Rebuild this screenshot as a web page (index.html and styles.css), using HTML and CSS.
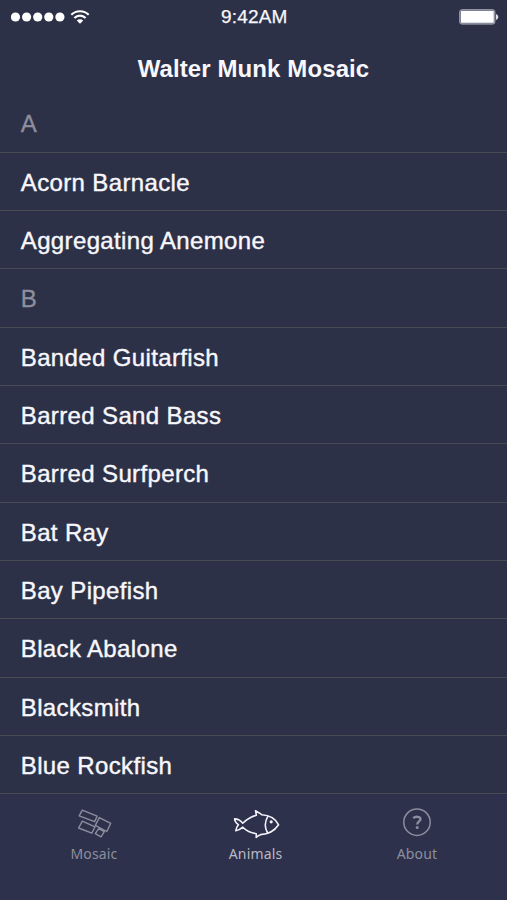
FILE: index.html
```html
<!DOCTYPE html>
<html lang="en">
<head>
<meta charset="utf-8">
<title>Walter Munk Mosaic</title>
<link rel="stylesheet" href="styles.css">
</head>
<body>
<div class="app">
  <header class="status">
    <div class="signal">
      <svg width="80" height="20" viewBox="0 0 80 20">
        <g fill="#fff"><circle cx="4.5" cy="10" r="4.6"/><circle cx="15.6" cy="10" r="4.6"/><circle cx="26.7" cy="10" r="4.6"/><circle cx="37.8" cy="10" r="4.6"/><circle cx="48.9" cy="10" r="4.6"/><path d="M69 16.8l-3.2-3.3a4.6 4.6 0 0 1 6.4 0z"/></g>
        <g fill="none" stroke="#fff" stroke-width="2.1"><path d="M60.3 7.8a12.3 12.3 0 0 1 17.4 0"/><path d="M63.4 11a7.9 7.9 0 0 1 11.2 0"/></g>
      </svg>
    </div>
    <div class="time">9:42AM</div>
    <div class="battery">
      <svg width="40" height="18" viewBox="0 0 40 18">
        <rect x=".7" y="1.7" width="35.2" height="14.4" rx="2.2" fill="#777b8d" stroke="#a3a5b2" stroke-width="1"/>
        <rect x="2" y="3" width="32.7" height="11.8" rx=".8" fill="#fff"/>
        <path d="M37 6.2c3 .5 3 5 0 5.6z" fill="#dfe0e7"/>
      </svg>
    </div>
  </header>
  <h1 class="title">Walter Munk Mosaic</h1>
  <ul class="list">
    <li class="row section">A</li>
    <li class="row">Acorn Barnacle</li>
    <li class="row">Aggregating Anemone</li>
    <li class="row section">B</li>
    <li class="row">Banded Guitarfish</li>
    <li class="row">Barred Sand Bass</li>
    <li class="row">Barred Surfperch</li>
    <li class="row">Bat Ray</li>
    <li class="row">Bay Pipefish</li>
    <li class="row">Black Abalone</li>
    <li class="row">Blacksmith</li>
    <li class="row">Blue Rockfish</li>
  </ul>
  <nav class="tabs">
    <a class="tab">
      <svg width="48" height="36" viewBox="0 0 48 36" fill="none" stroke="currentColor" stroke-width="1.4" stroke-linejoin="round"><path d="M12.3 4.2L27.1 10.2 24.6 15.6 9.2 9.9zM29.3 11.6L40.8 17.3 36.8 25.5 25.3 19.4zM12.3 15.2L25 20.8 21.8 27.2 8.6 22zM28.7 22.7L34.3 25.7 31 30.8 25.3 27.7z"/></svg>
      <span>Mosaic</span>
    </a>
    <a class="tab active">
      <svg width="48" height="36" viewBox="0 0 48 36" fill="none" stroke="currentColor" stroke-width="1.6" stroke-linejoin="round" stroke-linecap="round"><path d="M10.8 17.2C14.6 13.4 19 10.8 24.4 9.3L23.5 4.7C25.4 6.4 28 6.8 29.7 8.8 37.5 9.2 43.5 12.7 46.6 18.8 42.5 24.9 36 28.3 28.5 28.6 27.2 29.6 25.8 29.8 24.2 31.4L24.3 27.7C18.8 26.9 14.4 24.9 10.8 21.2 8.8 23 6.6 24.4 3.8 24.8 3.9 22.5 4.8 20.6 6.4 18.7 4.4 17.4 2.9 15.5 2.6 12.9 5.8 13 8.7 14.6 10.8 17.2z"/><path d="M35.8 10.4C32.9 15.5 32.7 22 35.6 27"/><circle cx="39.2" cy="15.8" r=".8" fill="currentColor"/></svg>
      <span>Animals</span>
    </a>
    <a class="tab">
      <svg width="48" height="36" viewBox="0 0 48 36" fill="none" stroke="currentColor"><circle cx="24" cy="16.2" r="13.2" stroke-width="1.5"/><path d="M20.2 12.1C22.1 10.3 27.5 10 27.5 13.2 27.5 15.4 24.2 15.7 24.2 18.6" stroke-width="2.3"/><circle cx="24.2" cy="21.5" r="1.5" fill="currentColor" stroke="none"/></svg>
      <span>About</span>
    </a>
  </nav>
</div>
</body>
</html>
```
FILE: styles.css
```css
* { box-sizing: border-box; }
body {
  margin: 0;
  background: #2d3148;
  font-family: "Liberation Sans", Arial, sans-serif;
  color: #f7f7fc;
}
.app {
  width: 507px;
  height: 900px;
  display: flex;
  flex-direction: column;
  overflow: hidden;
}
.status {
  height: 34px;
  flex: none;
  display: grid;
  grid-template-columns: 1fr auto 1fr;
  align-items: center;
  padding: 0 9px 0 10.5px;
}
.status svg { display: block; }
.time {
  font-size: 19px;
  letter-spacing: .15px;
  -webkit-text-stroke: .25px;
}
.battery { justify-self: end; margin-right: -1px; }
.title {
  flex: none;
  height: 60.3px;
  margin: 0;
  line-height: 70px;
  text-align: center;
  font-size: 24px;
  font-weight: 700;
  letter-spacing: .1px;
}
.list {
  flex: none;
  margin: 0;
  padding: 0;
  list-style: none;
}
.row {
  height: 58.34px;
  padding-left: 20.8px;
  border-bottom: 1px solid #494b52;
  font-size: 24px;
  line-height: 59.6px;
  letter-spacing: .36px;
  -webkit-text-stroke: .4px;
}
.section {
  color: #8d8f9e;
  -webkit-text-stroke: .3px;
}
.tabs {
  flex: 1;
  display: grid;
  grid-template-columns: repeat(3, 161.5px);
  justify-content: center;
  background: #2d314b;
  padding: 11.4px 0 0 4px;
}
.tab {
  display: flex;
  flex-direction: column;
  align-items: center;
  color: #8c8e9f;
  font-family: "Noto Sans", sans-serif;
  font-size: 14px;
  line-height: 20px;
  letter-spacing: .15px;
}
.tab svg { display: block; flex: none; }
.tab span { margin-top: 2px; }
.tab.active { color: #f1f1f7; }
.tab.active span { color: #b9bac6; }
```
